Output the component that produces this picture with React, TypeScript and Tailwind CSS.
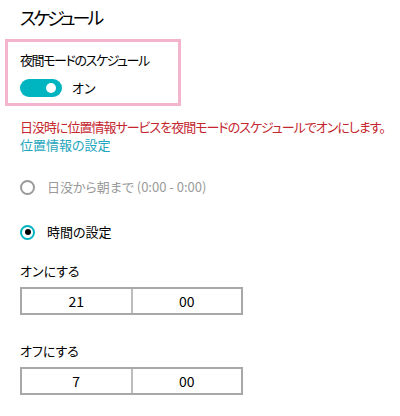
import { useState } from 'react'

const font = { fontFamily: '"Noto Sans CJK JP", "Noto Sans", sans-serif', fontFeatureSettings: '"palt"' }

function TimeBox({ h, m }: { h: string; m: string }) {
  return (
    <div className="ml-5 mt-[6px] flex h-[28px] w-[223px] border-2 border-[#a8a8a8] text-[14px] leading-[24px] text-black">
      <div className="flex-1 border-r-2 border-[#bdbdbd] text-center">{h}</div>
      <div className="flex-1 text-center">{m}</div>
    </div>
  )
}

export default function App() {
  const [on, setOn] = useState(true)
  const [mode, setMode] = useState<'sun' | 'custom'>('custom')

  return (
    <div className="h-[416px] w-[400px] overflow-hidden bg-white pt-[3px] text-black" style={font}>
      <h1 className="pl-5 text-[18px] font-normal leading-[28px] tracking-[-3px]">スケジュール</h1>

      <div className="ml-[5px] mt-2 h-[67px] w-[176px] border-[3px] border-[#f3b4ce] pl-3 pt-2">
        <div className="whitespace-nowrap text-[13px] leading-[20px] tracking-[-1.4px]">夜間モードのスケジュール</div>
        <div className="mt-2 flex h-[20px] items-center">
          <button
            onClick={() => setOn(!on)}
            className={`relative h-[18px] w-[42px] rounded-full ${on ? 'bg-[#00b4c0]' : 'border-2 border-[#333] bg-white'}`}
          >
            <span
              className={`absolute top-1/2 h-[10px] w-[10px] -translate-y-1/2 rounded-full ${on ? 'right-[6px] bg-white' : 'left-[4px] bg-[#333]'}`}
            />
          </button>
          <span className="ml-[10px] text-[13px] leading-[20px]">{on ? 'オン' : 'オフ'}</span>
        </div>
      </div>

      <div className="mt-3 pl-5 text-[13px] leading-[18px]">
        <div className="whitespace-nowrap tracking-[-1px] text-[#c4262e]">
          日没時に位置情報サービスを夜間モードのスケジュールでオンにします。
        </div>
        <div className="text-[#1ea5bd]">位置情報の設定</div>
      </div>

      <div className="mt-[23px] flex h-[20px] items-center pl-5 text-[13px] text-[#9a9a9a]" onClick={() => setMode('sun')}>
        <span className="flex h-[15px] w-[15px] items-center justify-center rounded-full border-2 border-[#9a9a9a]">
          {mode === 'sun' && <span className="h-[6px] w-[6px] rounded-full bg-[#9a9a9a]" />}
        </span>
        <span className="ml-[12px]">日没から朝まで (0:00 - 0:00)</span>
      </div>

      <div className="mt-[25px] flex h-[20px] items-center pl-5 text-[13px]" onClick={() => setMode('custom')}>
        <span className="flex h-[15px] w-[15px] items-center justify-center rounded-full border-2 border-[#00b4c0]">
          {mode === 'custom' && <span className="h-[6px] w-[6px] rounded-full bg-black" />}
        </span>
        <span className="ml-[12px]">時間の設定</span>
      </div>

      <div className="mt-[19px] pl-5 text-[13px] leading-[20px]">オンにする</div>
      <TimeBox h="21" m="00" />

      <div className="mt-[26px] pl-5 text-[13px] leading-[20px]">オフにする</div>
      <TimeBox h="7" m="00" />
    </div>
  )
}
